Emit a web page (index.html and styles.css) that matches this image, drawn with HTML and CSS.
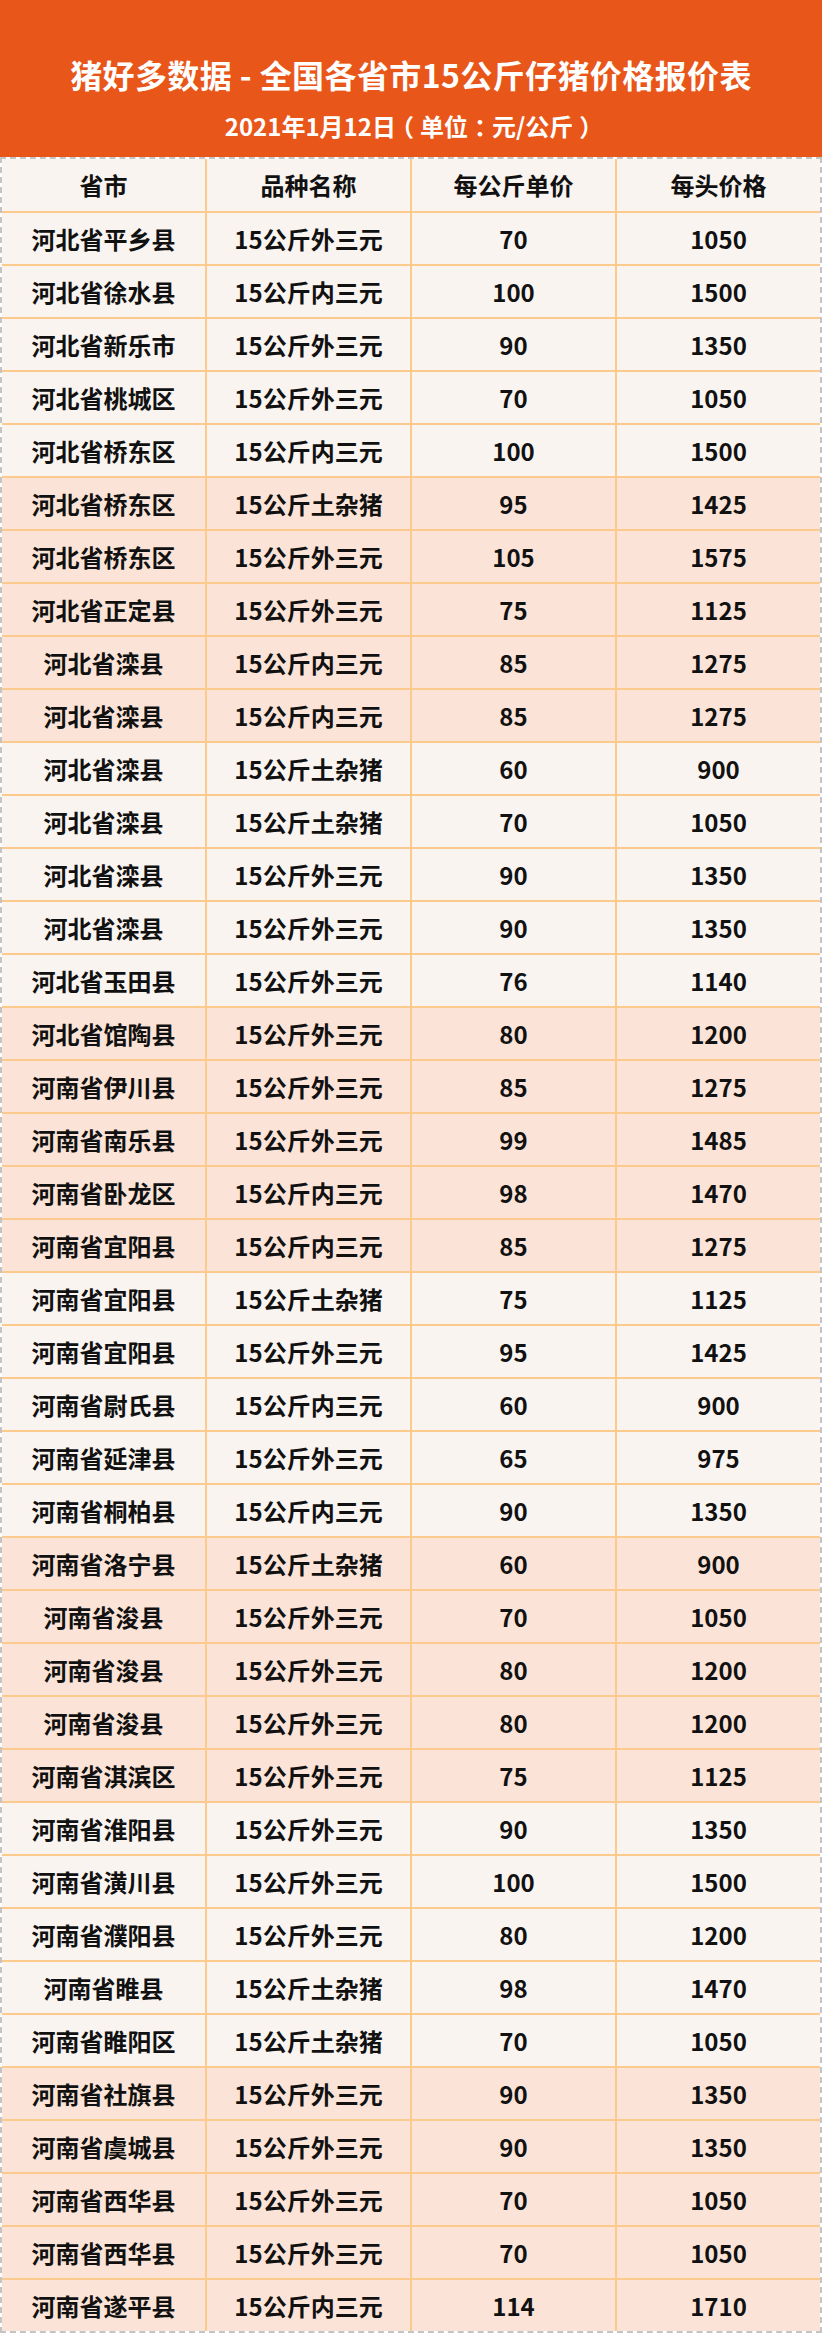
FILE: index.html
```html
<!DOCTYPE html>
<html lang="zh-CN">
<head>
<meta charset="utf-8">
<title>猪好多数据 - 全国各省市15公斤仔猪价格报价表</title>
<link rel="stylesheet" href="styles.css">
</head>
<body>
<div class="page">
  <header class="banner">
    <h1 class="title">猪好多数据 - 全国各省市15公斤仔猪价格报价表</h1>
    <p class="subtitle">2021年1月12日<span class="punct">（</span>单位<span class="punct">：</span>元/公斤<span class="punct">）</span></p>
  </header>
  <div class="table-wrap">
    <div class="table">
      <div class="row head"><div class="cell">省市</div><div class="cell">品种名称</div><div class="cell">每公斤单价</div><div class="cell">每头价格</div></div>
      <div class="row light"><div class="cell">河北省平乡县</div><div class="cell">15公斤外三元</div><div class="cell">70</div><div class="cell">1050</div></div>
      <div class="row light"><div class="cell">河北省徐水县</div><div class="cell">15公斤内三元</div><div class="cell">100</div><div class="cell">1500</div></div>
      <div class="row light"><div class="cell">河北省新乐市</div><div class="cell">15公斤外三元</div><div class="cell">90</div><div class="cell">1350</div></div>
      <div class="row light"><div class="cell">河北省桃城区</div><div class="cell">15公斤外三元</div><div class="cell">70</div><div class="cell">1050</div></div>
      <div class="row light"><div class="cell">河北省桥东区</div><div class="cell">15公斤内三元</div><div class="cell">100</div><div class="cell">1500</div></div>
      <div class="row pink"><div class="cell">河北省桥东区</div><div class="cell">15公斤土杂猪</div><div class="cell">95</div><div class="cell">1425</div></div>
      <div class="row pink"><div class="cell">河北省桥东区</div><div class="cell">15公斤外三元</div><div class="cell">105</div><div class="cell">1575</div></div>
      <div class="row pink"><div class="cell">河北省正定县</div><div class="cell">15公斤外三元</div><div class="cell">75</div><div class="cell">1125</div></div>
      <div class="row pink"><div class="cell">河北省滦县</div><div class="cell">15公斤内三元</div><div class="cell">85</div><div class="cell">1275</div></div>
      <div class="row pink"><div class="cell">河北省滦县</div><div class="cell">15公斤内三元</div><div class="cell">85</div><div class="cell">1275</div></div>
      <div class="row light"><div class="cell">河北省滦县</div><div class="cell">15公斤土杂猪</div><div class="cell">60</div><div class="cell">900</div></div>
      <div class="row light"><div class="cell">河北省滦县</div><div class="cell">15公斤土杂猪</div><div class="cell">70</div><div class="cell">1050</div></div>
      <div class="row light"><div class="cell">河北省滦县</div><div class="cell">15公斤外三元</div><div class="cell">90</div><div class="cell">1350</div></div>
      <div class="row light"><div class="cell">河北省滦县</div><div class="cell">15公斤外三元</div><div class="cell">90</div><div class="cell">1350</div></div>
      <div class="row light"><div class="cell">河北省玉田县</div><div class="cell">15公斤外三元</div><div class="cell">76</div><div class="cell">1140</div></div>
      <div class="row pink"><div class="cell">河北省馆陶县</div><div class="cell">15公斤外三元</div><div class="cell">80</div><div class="cell">1200</div></div>
      <div class="row pink"><div class="cell">河南省伊川县</div><div class="cell">15公斤外三元</div><div class="cell">85</div><div class="cell">1275</div></div>
      <div class="row pink"><div class="cell">河南省南乐县</div><div class="cell">15公斤外三元</div><div class="cell">99</div><div class="cell">1485</div></div>
      <div class="row pink"><div class="cell">河南省卧龙区</div><div class="cell">15公斤内三元</div><div class="cell">98</div><div class="cell">1470</div></div>
      <div class="row pink"><div class="cell">河南省宜阳县</div><div class="cell">15公斤内三元</div><div class="cell">85</div><div class="cell">1275</div></div>
      <div class="row light"><div class="cell">河南省宜阳县</div><div class="cell">15公斤土杂猪</div><div class="cell">75</div><div class="cell">1125</div></div>
      <div class="row light"><div class="cell">河南省宜阳县</div><div class="cell">15公斤外三元</div><div class="cell">95</div><div class="cell">1425</div></div>
      <div class="row light"><div class="cell">河南省尉氏县</div><div class="cell">15公斤内三元</div><div class="cell">60</div><div class="cell">900</div></div>
      <div class="row light"><div class="cell">河南省延津县</div><div class="cell">15公斤外三元</div><div class="cell">65</div><div class="cell">975</div></div>
      <div class="row light"><div class="cell">河南省桐柏县</div><div class="cell">15公斤内三元</div><div class="cell">90</div><div class="cell">1350</div></div>
      <div class="row pink"><div class="cell">河南省洛宁县</div><div class="cell">15公斤土杂猪</div><div class="cell">60</div><div class="cell">900</div></div>
      <div class="row pink"><div class="cell">河南省浚县</div><div class="cell">15公斤外三元</div><div class="cell">70</div><div class="cell">1050</div></div>
      <div class="row pink"><div class="cell">河南省浚县</div><div class="cell">15公斤外三元</div><div class="cell">80</div><div class="cell">1200</div></div>
      <div class="row pink"><div class="cell">河南省浚县</div><div class="cell">15公斤外三元</div><div class="cell">80</div><div class="cell">1200</div></div>
      <div class="row pink"><div class="cell">河南省淇滨区</div><div class="cell">15公斤外三元</div><div class="cell">75</div><div class="cell">1125</div></div>
      <div class="row light"><div class="cell">河南省淮阳县</div><div class="cell">15公斤外三元</div><div class="cell">90</div><div class="cell">1350</div></div>
      <div class="row light"><div class="cell">河南省潢川县</div><div class="cell">15公斤外三元</div><div class="cell">100</div><div class="cell">1500</div></div>
      <div class="row light"><div class="cell">河南省濮阳县</div><div class="cell">15公斤外三元</div><div class="cell">80</div><div class="cell">1200</div></div>
      <div class="row light"><div class="cell">河南省睢县</div><div class="cell">15公斤土杂猪</div><div class="cell">98</div><div class="cell">1470</div></div>
      <div class="row light"><div class="cell">河南省睢阳区</div><div class="cell">15公斤土杂猪</div><div class="cell">70</div><div class="cell">1050</div></div>
      <div class="row pink"><div class="cell">河南省社旗县</div><div class="cell">15公斤外三元</div><div class="cell">90</div><div class="cell">1350</div></div>
      <div class="row pink"><div class="cell">河南省虞城县</div><div class="cell">15公斤外三元</div><div class="cell">90</div><div class="cell">1350</div></div>
      <div class="row pink"><div class="cell">河南省西华县</div><div class="cell">15公斤外三元</div><div class="cell">70</div><div class="cell">1050</div></div>
      <div class="row pink"><div class="cell">河南省西华县</div><div class="cell">15公斤外三元</div><div class="cell">70</div><div class="cell">1050</div></div>
      <div class="row pink"><div class="cell">河南省遂平县</div><div class="cell">15公斤内三元</div><div class="cell">114</div><div class="cell">1710</div></div>
    </div>
  </div>
</div>
</body>
</html>
```
FILE: styles.css
```css
* { box-sizing: border-box; }
html, body {
  margin: 0;
  padding: 0;
  background: #ffffff;
}
body {
  font-family: "Noto Sans CJK SC", "Noto Sans", sans-serif;
  color: #111111;
}
.page {
  width: 822px;
}
.banner {
  height: 157px;
  background: #e9561a;
  color: #ffffff;
  display: flex;
  flex-direction: column;
  align-items: center;
  padding-top: 52px;
}
.title {
  margin: 0;
  font-size: 32px;
  line-height: 44px;
  font-weight: 700;
  letter-spacing: 0.4px;
}
.subtitle {
  margin: 13px 0 0;
  font-size: 24px;
  line-height: 34px;
  font-weight: 700;
}
.punct {
  display: inline-block;
  width: 1em;
  text-align: center;
  font-feature-settings: "halt";
}
.table-wrap {
  border: 2px dashed #c4c4c4;
}
.table {
  display: flex;
  flex-direction: column;
  gap: 2px;
  background: #fcca8c;
}
.row {
  display: grid;
  grid-template-columns: repeat(4, 1fr);
  column-gap: 2px;
  height: 51px;
}
.row.head {
  height: 52px;
}
.cell {
  display: flex;
  align-items: center;
  justify-content: center;
  font-size: 24px;
  font-weight: 700;
  line-height: 1;
}
.head .cell,
.light .cell {
  background: #f9f4f0;
}
.pink .cell {
  background: #fbe4d7;
}
```
